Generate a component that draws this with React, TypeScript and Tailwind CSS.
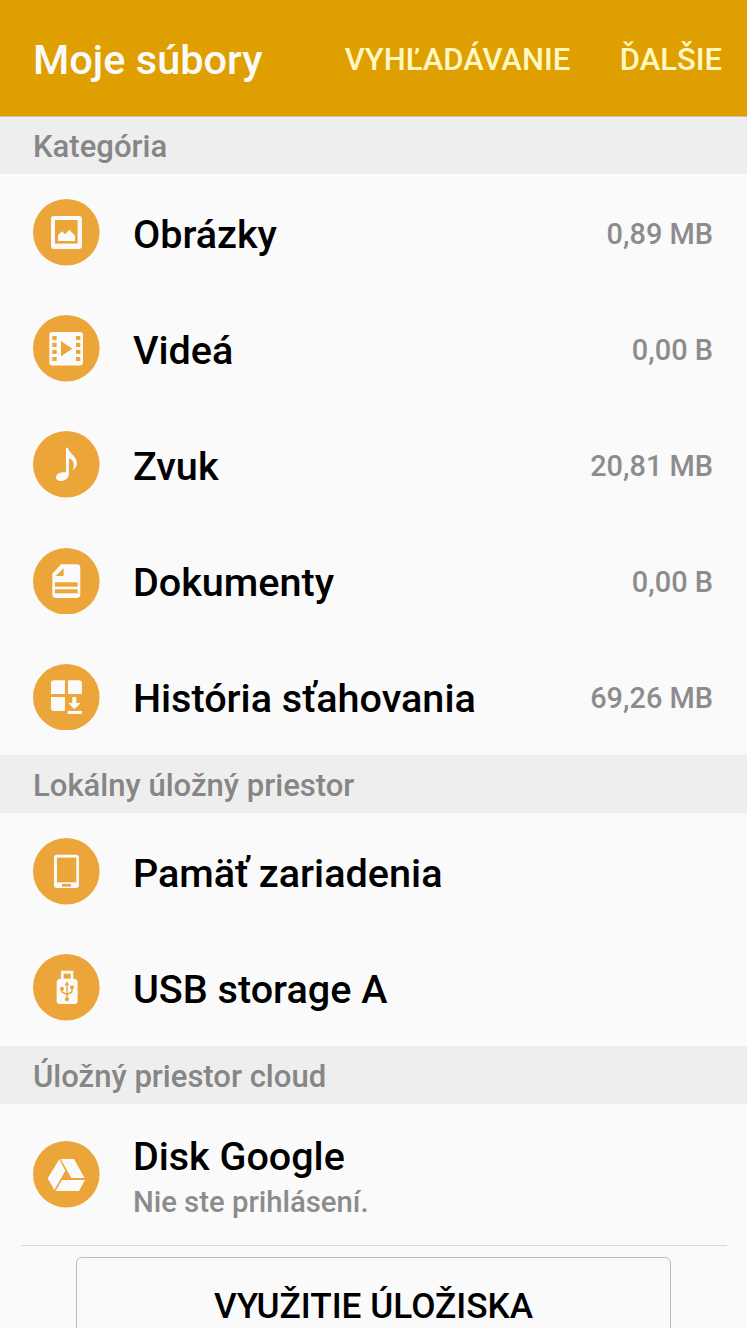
import React from "react";

const ORANGE = "#eca539";
const WHITE = "#fafafa";

// All icons share a 200x200 box, the size of the round badge
const PictureIcon = () => (
  <>
    <rect x="54" y="51" width="93" height="99" rx="9" fill={WHITE} />
    <rect x="66" y="63" width="68" height="71" fill={ORANGE} />
    <path d="M75 126V108L87 97L97 106L109 92L126 110V126Z" fill={WHITE} />
  </>
);

const VideoIcon = () => (
  <>
    <rect x="49" y="51" width="101" height="101" rx="9" fill={WHITE} />
    {[63, 84, 105, 126].map((y) => (
      <React.Fragment key={y}>
        <rect x="58" y={y} width="13" height="12" fill={ORANGE} />
        <rect x="129" y={y} width="13" height="12" fill={ORANGE} />
      </React.Fragment>
    ))}
    <path d="M84 78L118 101L84 124Z" fill={ORANGE} />
  </>
);

const MusicIcon = () => (
  <path
    d="M99 50H105C108 69 132 72 132 99C131 106 126 114 119 117C125 105 124 87 108 82V127C108 142 97 150 84 150C74 150 68 145 69 138C71 127 83 122 99 124Z"
    fill={WHITE}
  />
);

const DocumentIcon = () => (
  <>
    <path d="M84 49H132Q142 49 142 59V140Q142 150 132 150H68Q58 150 58 140V77Z" fill={WHITE} />
    <path d="M92 61V84H68Z" fill={ORANGE} />
    <rect x="66" y="103" width="68" height="13" fill={ORANGE} />
    <rect x="66" y="124" width="68" height="12" fill={ORANGE} />
  </>
);

const DownloadIcon = () => (
  <g fill={WHITE}>
    <path d="M63 49H96V90H54V58Q54 49 63 49Z" />
    <path d="M105 49H138Q147 49 147 58V90H105Z" />
    <path d="M54 99H96V141H63Q54 141 54 132Z" />
    <path d="M118 99H130V117H143L124 136L106 117H118Z" />
    <rect x="104" y="141" width="43" height="9" />
  </g>
);

const PhoneIcon = () => (
  <>
    <rect x="63" y="50" width="75" height="100" rx="9" fill={WHITE} />
    <rect x="72" y="59" width="58" height="74" fill={ORANGE} />
    <rect x="87" y="138" width="27" height="8" fill={ORANGE} />
  </>
);

const UsbIcon = () => (
  <>
    <path
      d="M84 50H121V74H125Q135 77 134 87V141Q134 150 125 150H80Q71 150 71 141V87Q70 77 80 74H84Z"
      fill={WHITE}
    />
    <rect x="92" y="59" width="21" height="15" fill={ORANGE} />
    <g fill="none" stroke={ORANGE} strokeWidth="4">
      <path d="M102 88V136" />
      <path d="M87 105V114L102 121" />
      <path d="M117 101V114L102 121" />
    </g>
    <path d="M102 82L109 94H95Z" fill={ORANGE} />
    <circle cx="87" cy="104" r="6" fill={ORANGE} />
    <rect x="112" y="95" width="10" height="10" fill={ORANGE} />
    <circle cx="102" cy="136" r="6" fill={ORANGE} />
  </>
);

const DriveIcon = () => (
  <g fill={WHITE}>
    <path d="M79 55L97 89L64 147L44 112Z" />
    <path d="M83 54H123L155 111H115Z" />
    <path d="M87 117H156L138 150H68Z" />
  </g>
);

const categories = [
  { name: "Obrázky", size: "0,89 MB", icon: <PictureIcon /> },
  { name: "Videá", size: "0,00 B", icon: <VideoIcon /> },
  { name: "Zvuk", size: "20,81 MB", icon: <MusicIcon /> },
  { name: "Dokumenty", size: "0,00 B", icon: <DocumentIcon /> },
  { name: "História sťahovania", size: "69,26 MB", icon: <DownloadIcon /> },
];

const storages = [
  { name: "Pamäť zariadenia", icon: <PhoneIcon /> },
  { name: "USB storage A", icon: <UsbIcon /> },
];

function Badge({ children }: { children: React.ReactNode }) {
  return (
    <svg viewBox="0 0 200 200" className="w-[66.6px] h-[66.6px] shrink-0">
      <circle cx="100" cy="100" r="100" fill={ORANGE} />
      {children}
    </svg>
  );
}

function SectionTitle({ title }: { title: string }) {
  return (
    <h2 className="h-[58.1px] shrink-0 flex items-center pl-[33px] pt-[3px] bg-[#eeeeee] text-[#868686] text-[31.05px] leading-none font-medium">
      {title}
    </h2>
  );
}

function Row({ name, size, icon }: { name: string; size?: string; icon: React.ReactNode }) {
  return (
    <li className="h-[116.2px] flex items-center pl-[33px] pr-[34px]">
      <Badge>{icon}</Badge>
      <span className="ml-[33.3px] mt-[4px] flex-1 text-[39.6px] leading-none font-medium whitespace-nowrap">{name}</span>
      {size && <span className="mt-[3.4px] text-[28.9px] leading-none font-medium text-[#8c8c8e]">{size}</span>}
    </li>
  );
}

export default function App() {
  return (
    <div className="w-full h-screen overflow-hidden flex flex-col bg-[#fafafa] text-black font-['Roboto',sans-serif]">
      <header className="h-[116.2px] shrink-0 flex items-center pl-[33px] pr-[25px] pt-[3px] bg-[#e09f00] leading-none font-medium">
        <h1 className="flex-1 pt-px text-[41.5px] text-[#fafafa]">Moje súbory</h1>
        <button className="text-[31px] text-[#fff8c1]">VYHĽADÁVANIE</button>
        <button className="ml-[49.5px] text-[31px] text-[#fff8c1]">ĎALŠIE</button>
      </header>
      <div className="h-px -mb-px shrink-0 bg-[#c9c0b0] z-10" />

      {/* Categories */}
      <SectionTitle title="Kategória" />
      <ul className="shrink-0">
        {categories.map((item) => (
          <Row key={item.name} {...item} />
        ))}
      </ul>

      {/* Local storage */}
      <SectionTitle title="Lokálny úložný priestor" />
      <ul className="shrink-0">
        {storages.map((item) => (
          <Row key={item.name} {...item} />
        ))}
      </ul>

      {/* Cloud */}
      <SectionTitle title="Úložný priestor cloud" />
      <div className="h-[141px] shrink-0 flex items-center pl-[33px]">
        <Badge>
          <DriveIcon />
        </Badge>
        <div className="ml-[33.3px] mt-[10px] font-medium">
          <div className="text-[39.5px] leading-[46px]">Disk Google</div>
          <div className="text-[29.3px] leading-[45px] text-[#8c8c8e]">Nie ste prihlásení.</div>
        </div>
      </div>
      <hr className="ml-[21px] mr-[20px] shrink-0 border-[#d8d8d8]" />
      <button className="mt-[11px] mx-[76px] h-[99px] shrink-0 rounded-md border border-[#bdbdbd] text-[35.2px] leading-none font-medium">
        VYUŽITIE ÚLOŽISKA
      </button>
    </div>
  );
}
